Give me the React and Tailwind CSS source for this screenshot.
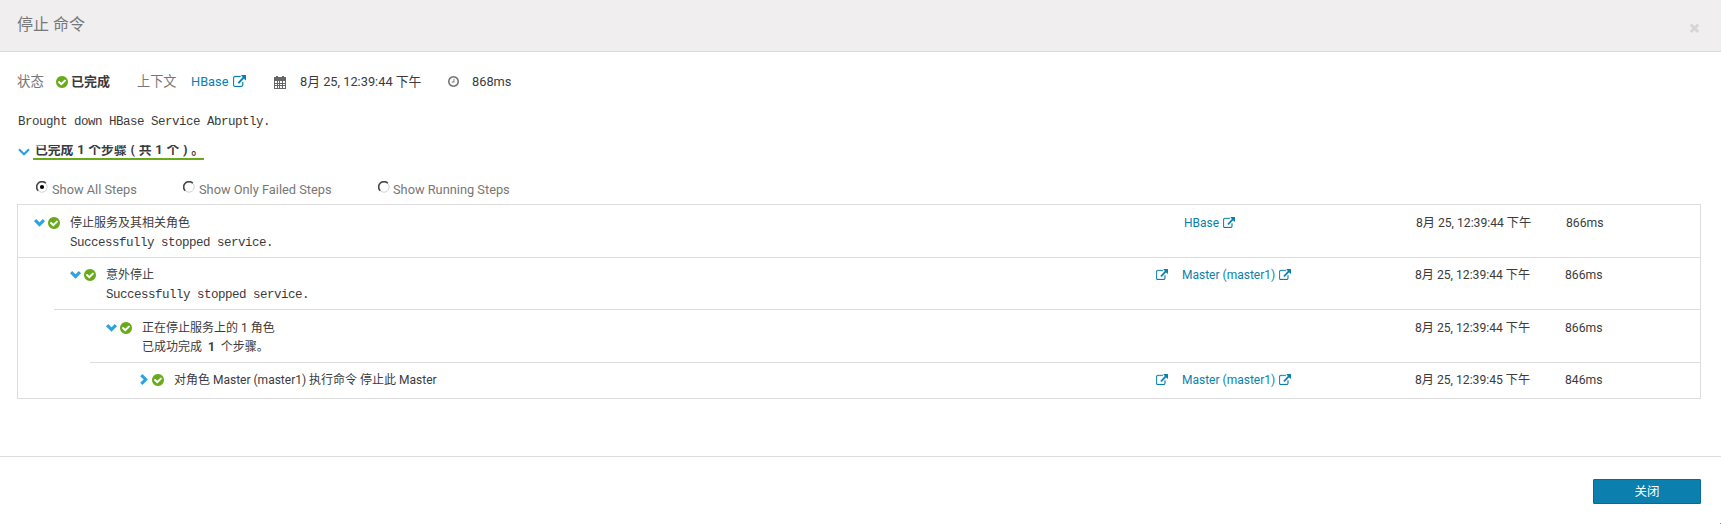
const P = {
  ext: "M1408 928v320q0 119-84.5 203.5t-203.5 84.5h-832q-119 0-203.5-84.5t-84.5-203.5v-832q0-119 84.5-203.5t203.5-84.5h704q14 0 23 9t9 23v64q0 14-9 23t-23 9h-704q-66 0-113 47t-47 113v832q0 66 47 113t113 47h832q66 0 113-47t47-113v-320q0-14 9-23t23-9h64q14 0 23 9t9 23zm384-864v512q0 26-19 45t-45 19-45-19l-176-176-652 652q-10 10-23 10t-23-10l-114-114q-10-10-10-23t10-23l652-652-176-176q-19-19-19-45t19-45 45-19h512q26 0 45 19t19 45z",
  check: "M1412 734q0-28-18-46l-91-90q-19-19-45-19t-45 19l-408 407-226-226q-19-19-45-19t-45 19l-91 90q-18 18-18 46 0 27 18 45l362 362q19 19 45 19 27 0 46-19l543-543q18-18 18-45zm252 162q0 209-103 385.5t-279.5 279.5-385.5 103-385.5-103-279.5-279.5-103-385.5 103-385.5 279.5-279.5 385.5-103 385.5 103 279.5 279.5 103 385.5z",
  clock: "M1024 544v448q0 14-9 23t-23 9h-320q-14 0-23-9t-9-23v-64q0-14 9-23t23-9h224v-352q0-14 9-23t23-9h64q14 0 23 9t9 23zm416 352q0-148-73-273t-198-198-273-73-273 73-198 198-73 273 73 273 198 198 273 73 273-73 198-198 73-273zm224 0q0 209-103 385.5t-279.5 279.5-385.5 103-385.5-103-279.5-279.5-103-385.5 103-385.5 279.5-279.5 385.5-103 385.5 103 279.5 279.5 103 385.5z",
  times: "M1490 1322q0 40-28 68l-136 136q-28 28-68 28t-68-28l-294-294-294 294q-28 28-68 28t-68-28l-136-136q-28-28-28-68t28-68l294-294-294-294q-28-28-28-68t28-68l136-136q28-28 68-28t68 28l294 294 294-294q28-28 68-28t68 28l136 136q28 28 28 68t-28 68l-294 294 294 294q28 28 28 68z",
};

function Icon({ name, box = "0 0 1792 1792", className }) {
  return (
    <svg viewBox={box} className={"shrink-0 " + className} fill="currentColor">
      <path d={P[name]} />
    </svg>
  );
}

function Ext({ className }) {
  return (
    <svg viewBox="0 0 1792 1536" className={"shrink-0 " + className} fill="currentColor" stroke="currentColor" strokeWidth="40" preserveAspectRatio="none">
      <path d={P.ext} />
    </svg>
  );
}

const Check = ({ className }) => <Icon name="check" box="128 128 1536 1536" className={"text-[#68aa1a] " + className} />;

function Calendar({ className }) {
  return (
    <svg viewBox="0 0 12 13" className={"shrink-0 " + className} fill="currentColor" shapeRendering="crispEdges">
      <path fillRule="evenodd" d="M2 0h2v1h4V0h2v1h2v12H0V1h2zM1 5v2h2V5zM4 5v2h1V5zM6 5v2h2V5zM9 5v2h2V5zM1 8v1h2V8zM4 8v1h1V8zM6 8v1h2V8zM9 8v1h2V8zM1 10v2h2v-2zM4 10v2h1v-2zM6 10v2h2v-2zM9 10v2h2v-2z" />
    </svg>
  );
}

function Chevron({ open, className }) {
  return (
    <svg viewBox="0 0 10 10" className={"shrink-0 " + className} fill="none" stroke="#2ba3df" strokeWidth="2.8">
      <path d={open ? "M1 2.8 5 6.8 9 2.8" : "M3 1 7 5 3 9"} />
    </svg>
  );
}

function Radio({ on }) {
  return (
    <svg viewBox="0 0 12 12" className="mt-px size-3 shrink-0" fill="none">
      <circle cx="6" cy="6" r="5.2" fill="#fff" stroke="#d6d3ce" />
      <path d="M2.2 9.8A5.3 5.3 0 0 1 9.8 2.2" stroke="#484848" strokeWidth="1.6" />
      {on && <circle cx="6" cy="6" r="2.1" fill="#000" />}
    </svg>
  );
}

const MONO = "font-['Liberation_Mono','Noto_Sans_CJK_SC',monospace] text-[12.5px] tracking-[-0.5px]";

const steps = [
  { row: "", body: "h-[52px] pl-4 pt-[9px]", title: "停止服务及其相关角色", msg: "Successfully stopped service.", ctx: "HBase", time: "8月 25, 12:39:44 下午", dur: "866ms", open: true },
  { row: "border-t", body: "h-[51px] pl-[52px] pt-2", title: "意外停止", msg: "Successfully stopped service.", log: true, ctx: "Master (master1)", time: "8月 25, 12:39:44 下午", dur: "866ms", open: true },
  { row: "border-t ml-9", body: "h-[52px] pl-[52px] pt-[9px]", title: "正在停止服务上的 1 角色", msg: <>已成功完成{"  "}<b>1</b>{"  "}个步骤。</>, cjk: true, ctx: "", time: "8月 25, 12:39:44 下午", dur: "866ms", open: true },
  { row: "border-t ml-[72px]", body: "h-[35px] pl-12 pt-2", title: "对角色 Master (master1) 执行命令 停止此 Master", log: true, ctx: "Master (master1)", time: "8月 25, 12:39:45 下午", dur: "846ms", open: false },
];

function Step({ s, first }) {
  return (
    <div className={"border-[#dddddd] " + s.row}>
      <div className={"flex items-start text-[12px] leading-[19px] " + s.body}>
        <Chevron open={s.open} className="mt-[3px] size-[11px]" />
        <Check className="mt-[3px] ml-[3px] size-3" />
        <div className="ml-[10px] min-w-0 flex-1">
          <div>{s.title}</div>
          {s.msg && <div className={s.cjk ? "whitespace-pre" : "pt-px " + MONO}>{s.msg}</div>}
        </div>
        <div className="flex w-[26px] shrink-0 pt-[3px] text-[#0b7fad]">{s.log && <Ext className="h-[11px] w-3" />}</div>
        <div className={"flex shrink-0 text-[#0b7fad] " + (first ? "w-[232px]" : "w-[233px]")}>
          {s.ctx && <><span>{s.ctx}</span><Ext className="mt-[3px] ml-1 h-[11px] w-3" /></>}
        </div>
        <div className="w-[150px] shrink-0 text-[12.15px] whitespace-nowrap">{s.time}</div>
        <div className={"shrink-0 text-[12.2px] " + (first ? "w-[134px]" : "w-[135px]")}>{s.dur}</div>
      </div>
    </div>
  );
}

export default function App() {
  return (
    <div className="flex h-[524px] w-[1721px] flex-col bg-white font-[Roboto,'Noto_Sans_CJK_SC',sans-serif] text-[12.8px] text-[#3b3b3b]">
      <header className="flex h-[52px] items-center justify-between border-b border-[#dcdadb] bg-[#f0eeef] pr-[22px] pl-[17px]">
        <h1 className="pb-px text-[16px] text-[#777777]">停止 命令</h1>
        <Icon name="times" box="302 302 1188 1252" className="mt-1 h-[10px] w-[9px] text-[#d6d5d5]" />
      </header>
      <main className="flex-1 px-[17px]">
        <div className="mt-5 flex h-5 items-center">
          <span className="w-[39px] text-[13.4px] text-[#777777]">状态</span>
          <Check className="size-[12px]" />
          <b className="ml-[3px] w-[66px] text-[13px]">已完成</b>
          <span className="w-[54px] text-[13.2px] text-[#777777]">上下文</span>
          <span className="w-[42px] text-[#0b7fad]">HBase</span>
          <Ext className="mb-0.5 h-3 w-[13px] text-[#0b7fad]" />
          <Calendar className="ml-7 h-[13px] w-3 text-[#666]" />
          <span className="ml-[14px] w-[148px] whitespace-nowrap">8月 25, 12:39:44 下午</span>
          <Icon name="clock" box="128 128 1536 1536" className="mb-px size-[11px] text-[#777777]" />
          <span className="ml-[13px]">868ms</span>
        </div>
        <p className={"mt-5 h-5 pl-px leading-5 " + MONO}>Brought down HBase Service Abruptly.</p>
        <div className="mt-[13px] flex h-[15px]">
          <svg viewBox="0 0 12 8" className="mt-[3px] mr-1 ml-px h-2 w-3 shrink-0" fill="none" stroke="#2ba3df" strokeWidth="2.2">
            <path d="M1 1.2 6 6.2 11 1.2" />
          </svg>
          <div className="-ml-px flex h-[15px] w-[171px] items-end overflow-hidden border-b-2 border-[#68aa1a]">
            <b className="pl-0.5 text-[12.8px] leading-[17px] whitespace-nowrap [word-spacing:0.6px]">已完成 1 个步骤 ( 共 1 个 ) 。</b>
          </div>
        </div>
        <div className="mt-[18px] mb-[2px] flex h-6 items-center pl-[19px] text-[#777777]">
          <label className="flex w-[147px] gap-1"><Radio on /><span>Show All Steps</span></label>
          <label className="flex w-[195px] gap-1"><Radio /><span>Show Only Failed Steps</span></label>
          <label className="flex gap-[3px]"><Radio /><span>Show Running Steps</span></label>
        </div>
        <section className="w-[1684px] border border-[#dddddd]">
          {steps.map((s, i) => <Step key={i} s={s} first={i === 0} />)}
        </section>
      </main>
      <footer className="flex h-[68px] items-start justify-end border-t border-[#dddddd] pt-[22px]">
        <button className="h-[25px] w-[108px] rounded-[1px] border border-[#0a6a92] bg-[#0b7fad] pt-px text-[12.5px] leading-[22px] text-white">关闭</button>
        <span className="ml-[19px] size-px self-end bg-[#888888]" />
      </footer>
    </div>
  );
}
